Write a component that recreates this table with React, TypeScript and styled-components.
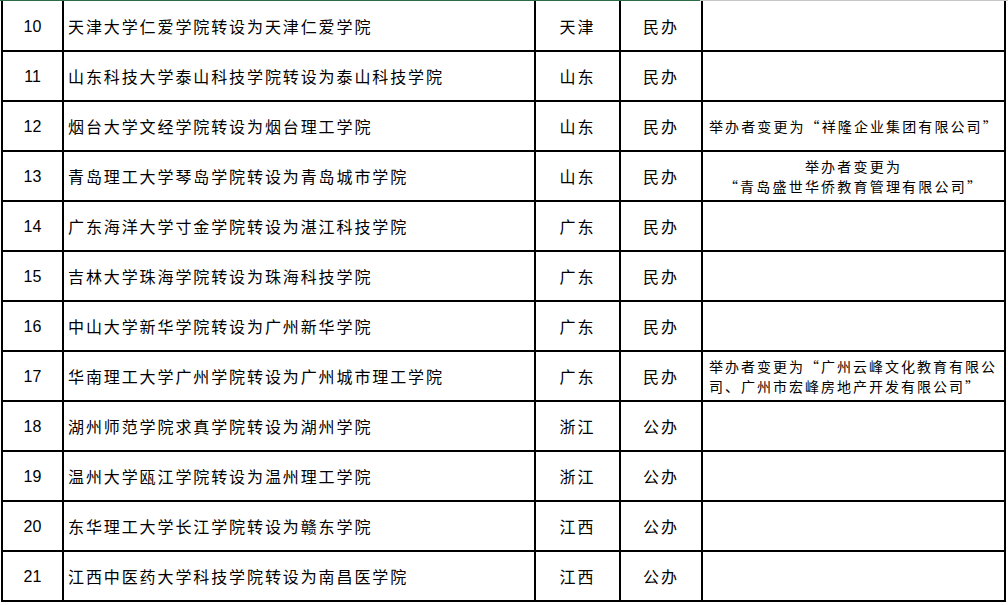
import styled, { createGlobalStyle } from "styled-components";

const GlobalStyle = createGlobalStyle`
  body {
    margin: 0;
    background: #fff;
    font-family: "Noto Sans CJK SC", "Noto Sans", sans-serif;
    color: #000;
  }
`;

type Row = {
  no: number;
  name: string;
  region: string;
  kind: string;
  note?: string[];
  spacing?: number;
};

const rows: Row[] = [
  { no: 10, name: "天津大学仁爱学院转设为天津仁爱学院", region: "天津", kind: "民办" },
  { no: 11, name: "山东科技大学泰山科技学院转设为泰山科技学院", region: "山东", kind: "民办" },
  {
    no: 12,
    name: "烟台大学文经学院转设为烟台理工学院",
    region: "山东",
    kind: "民办",
    note: ["举办者变更为“祥隆企业集团有限公司”"],
    spacing: 2.1,
  },
  {
    no: 13,
    name: "青岛理工大学琴岛学院转设为青岛城市学院",
    region: "山东",
    kind: "民办",
    note: ["举办者变更为", "“青岛盛世华侨教育管理有限公司”"],
    spacing: 2.2,
  },
  { no: 14, name: "广东海洋大学寸金学院转设为湛江科技学院", region: "广东", kind: "民办" },
  { no: 15, name: "吉林大学珠海学院转设为珠海科技学院", region: "广东", kind: "民办" },
  { no: 16, name: "中山大学新华学院转设为广州新华学院", region: "广东", kind: "民办" },
  {
    no: 17,
    name: "华南理工大学广州学院转设为广州城市理工学院",
    region: "广东",
    kind: "民办",
    note: ["举办者变更为“广州云峰文化教育有限公", "司、广州市宏峰房地产开发有限公司”"],
    spacing: 2,
  },
  { no: 18, name: "湖州师范学院求真学院转设为湖州学院", region: "浙江", kind: "公办" },
  { no: 19, name: "温州大学瓯江学院转设为温州理工学院", region: "浙江", kind: "公办" },
  { no: 20, name: "东华理工大学长江学院转设为赣东学院", region: "江西", kind: "公办" },
  { no: 21, name: "江西中医药大学科技学院转设为南昌医学院", region: "江西", kind: "公办" },
];

function App() {
  return (
    <Page>
      <GlobalStyle />
      <TopEdge>
        <EdgePart $color="#2d6b47" $width={700} />
        <EdgePart $color="#c6c6c6" />
      </TopEdge>
      <Sheet>
        <colgroup>
          <col style={{ width: 61 }} />
          <col style={{ width: 472 }} />
          <col style={{ width: 85 }} />
          <col style={{ width: 82 }} />
          <col style={{ width: 303 }} />
        </colgroup>
        <tbody>
          {rows.map((r) => (
            <tr key={r.no}>
              <NumCell>{r.no}</NumCell>
              <NameCell>{r.name}</NameCell>
              <CenterCell>{r.region}</CenterCell>
              <CenterCell>{r.kind}</CenterCell>
              <NoteCell $spacing={r.spacing ?? 1.7} $left={r.no !== 13}>
                {r.note?.map((line) => (
                  <NoteLine key={line}>{line}</NoteLine>
                ))}
              </NoteCell>
            </tr>
          ))}
        </tbody>
      </Sheet>
    </Page>
  );
}
export default App;

const Page = styled.div`
  width: 1008px;
  height: 605px;
  overflow: hidden;
  background: #fff;
`;

const TopEdge = styled.div`
  display: flex;
  height: 1px;
`;

const EdgePart = styled.div<{ $color: string; $width?: number }>`
  height: 1px;
  background: ${(p) => p.$color};
  ${(p) => (p.$width ? `width: ${p.$width}px;` : "flex: 1;")}
`;

const Sheet = styled.table`
  margin-left: 1px;
  border-collapse: collapse;
  table-layout: fixed;
  width: 1005px;

  tr {
    height: 50px;
  }

  td {
    border: 2px solid #000;
    padding: 0;
    vertical-align: middle;
  }

  tr:first-child td {
    border-top: none;
  }
`;

const NumCell = styled.td`
  text-align: center;
  font-family: "Liberation Sans", "DejaVu Sans", sans-serif;
  font-size: 16px;
  padding-top: 2px !important;
`;

const NameCell = styled.td`
  padding-left: 4px !important;
  font-size: 16px;
  letter-spacing: 1.9px;
  white-space: nowrap;
`;

const CenterCell = styled.td`
  text-align: center;
  font-size: 16px;
  letter-spacing: 1.9px;
  white-space: nowrap;
`;

const NoteCell = styled.td<{ $spacing: number; $left: boolean }>`
  font-size: 14px;
  letter-spacing: ${(p) => p.$spacing}px;
  line-height: 20px;
  text-align: ${(p) => (p.$left ? "left" : "center")};
  padding-left: ${(p) => (p.$left ? "6px" : "0")} !important;
  white-space: nowrap;
`;

const NoteLine = styled.div``;
